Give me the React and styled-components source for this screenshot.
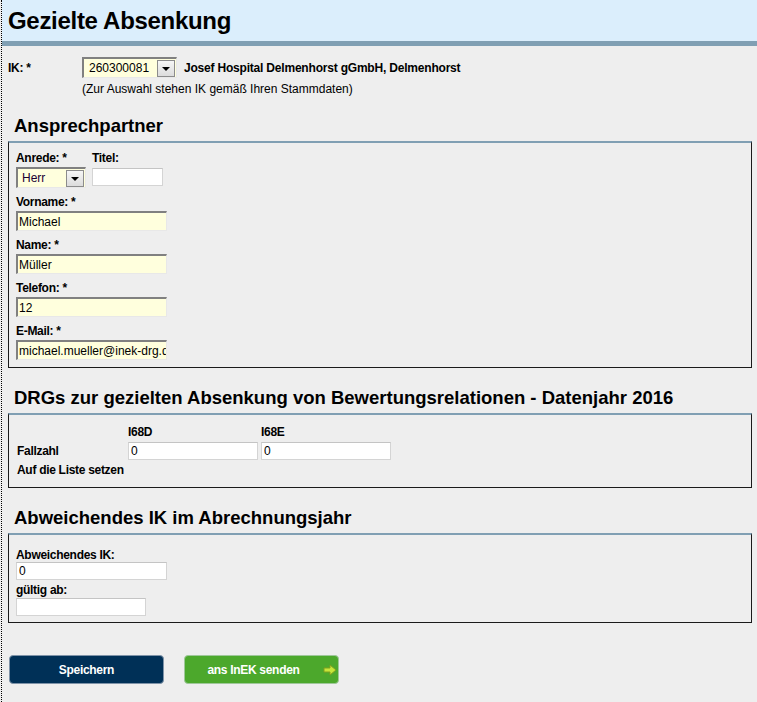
import React from "react";
import styled, { createGlobalStyle } from "styled-components";

const Global = createGlobalStyle`
  html, body { margin: 0; padding: 0; background: #eeeeee; }
  body { font-family: "Liberation Sans", Arial, sans-serif; font-size: 12px; color: #000; }
  * { box-sizing: border-box; }
`;

const Page = styled.div`
  margin-left: 1px;
  border-left: 1px dotted #000;
  min-height: 702px;
  background: #eeeeee;
`;

const Header = styled.div`
  height: 46px;
  background: #dbeefc;
  border-bottom: 5px solid #809fb3;
  padding-left: 6px;
`;

const Title = styled.h1`
  margin: 0;
  font-size: 24px;
  line-height: 41px;
  font-weight: bold;
  letter-spacing: -0.3px;
  color: #000;
`;

const Content = styled.div`
  padding: 11px 5px 0 6px;
`;

const IkRow = styled.div`
  display: flex;
  align-items: center;
  height: 21px;
`;

const IkLabel = styled.span`
  width: 74px;
  font-weight: bold;
  letter-spacing: -0.3px;
`;

const HospitalName = styled.span`
  margin-left: 7px;
  font-weight: bold;
  letter-spacing: -0.2px;
`;

const Note = styled.div`
  margin: 4px 0 0 74px;
  line-height: 14px;
`;

const SelectBox = styled.div`
  display: flex;
  align-items: center;
  width: ${(p) => p.$w}px;
  height: 21px;
  background: #ffffdd;
  border-top: 2px solid #808080;
  border-left: 2px solid #808080;
  border-right: 1px solid #e8e8e8;
  border-bottom: 1px solid #e8e8e8;
  padding-right: 1px;
`;

const SelectValue = styled.span`
  flex: 1;
  padding-left: ${(p) => p.$pad || 4}px;
  color: ${(p) => p.$color || "#000"};
  line-height: 16px;
`;

const ArrowBtn = styled.span`
  width: 18px;
  height: 17px;
  border: 1px solid #8c8c8c;
  background: linear-gradient(#f6f6f6, #dcdcdc);
  display: flex;
  align-items: center;
  justify-content: center;
  &::after {
    content: "";
    border-left: 4px solid transparent;
    border-right: 4px solid transparent;
    border-top: 4px solid #000;
    margin-top: 1px;
  }
`;

const SectionTitle = styled.h2`
  margin: 19px 0 4px 6px;
  font-size: 18.5px;
  line-height: 22px;
  font-weight: bold;
`;

const Box = styled.div`
  border: 1px solid #1a1a1a;
  border-top: 2px solid #809fb3;
  padding: ${(p) => p.$pad || "8px 7px 7px 7px"};
`;

const FieldLabel = styled.label`
  display: block;
  font-weight: bold;
  line-height: 14px;
  letter-spacing: -0.3px;
  margin-bottom: ${(p) => (p.$mb === undefined ? 2 : p.$mb)}px;
`;

const Group = styled.div`
  margin-bottom: ${(p) => (p.$mb === undefined ? 7 : p.$mb)}px;
`;

const YellowInput = styled.input`
  display: block;
  width: ${(p) => p.$w || 151}px;
  height: 20px;
  margin: 0;
  padding: 0 0 0 1px;
  font-family: "Liberation Sans", Arial, sans-serif;
  font-size: 12px;
  color: #000;
  background: #ffffdd;
  border-top: 2px solid #808080;
  border-left: 2px solid #808080;
  border-right: 1px solid #e8e8e8;
  border-bottom: 1px solid #e8e8e8;
  outline: none;
`;

const WhiteInput = styled.input`
  display: block;
  width: ${(p) => p.$w || 151}px;
  height: 18px;
  margin: 0;
  padding: 0 0 0 2px;
  font-family: "Liberation Sans", Arial, sans-serif;
  font-size: 12px;
  color: #000;
  background: #fff;
  border: 1px solid #d4d4d4;
  border-top-color: #c4c4c4;
  outline: none;
`;

const SalutationRow = styled.div`
  display: flex;
  align-items: flex-start;
  gap: 6px;
  margin-bottom: 7px;
`;

const TitleCol = styled.div`
  display: flex;
  flex-direction: column;
`;

const TitleInput = styled(WhiteInput)`
  margin-top: 3px;
`;

const DrgGrid = styled.div`
  display: grid;
  grid-template-columns: 111px 133px 133px;
  row-gap: 3px;
  align-items: center;
  padding-left: 1px;
`;

const Bold = styled.span`
  font-weight: bold;
  letter-spacing: -0.3px;
  line-height: 14px;
`;

const ButtonRow = styled.div`
  display: flex;
  gap: 20px;
  margin: 32px 0 0 1px;
`;

const Button = styled.button`
  position: relative;
  width: 155px;
  height: 29px;
  border-radius: 4px;
  border: 1px solid ${(p) => (p.$green ? "#9fc79a" : "#7f93a8")};
  background: ${(p) => (p.$green ? "#4ca82c" : "#003057")};
  color: #fff;
  font-family: "Liberation Sans", Arial, sans-serif;
  font-size: 12px;
  font-weight: bold;
  letter-spacing: -0.3px;
  padding: 0 ${(p) => (p.$green ? "16px" : "0")} 0 0;
  cursor: pointer;
`;

const ArrowIcon = styled.svg`
  position: absolute;
  right: 1px;
  top: 8px;
`;

function Select({ value, width, pad, color }) {
  return (
    <SelectBox $w={width}>
      <SelectValue $pad={pad} $color={color}>{value}</SelectValue>
      <ArrowBtn />
    </SelectBox>
  );
}

export default function App() {
  return (
    <>
      <Global />
      <Page>
        <Header>
          <Title>Gezielte Absenkung</Title>
        </Header>
        <Content>
          <IkRow>
            <IkLabel>IK: *</IkLabel>
            <Select value="260300081" width={95} pad={5} />
            <HospitalName>Josef Hospital Delmenhorst gGmbH, Delmenhorst</HospitalName>
          </IkRow>
          <Note>(Zur Auswahl stehen IK gemäß Ihren Stammdaten)</Note>

          <SectionTitle>Ansprechpartner</SectionTitle>
          <Box>
            <SalutationRow>
              <TitleCol>
                <FieldLabel>Anrede: *</FieldLabel>
                <Select value="Herr" width={70} pad={4} color="#1a0033" />
              </TitleCol>
              <TitleCol>
                <FieldLabel $mb={0}>Titel:</FieldLabel>
                <TitleInput $w={71} />
              </TitleCol>
            </SalutationRow>
            <Group>
              <FieldLabel>Vorname: *</FieldLabel>
              <YellowInput defaultValue="Michael" />
            </Group>
            <Group>
              <FieldLabel>Name: *</FieldLabel>
              <YellowInput defaultValue="Müller" />
            </Group>
            <Group>
              <FieldLabel>Telefon: *</FieldLabel>
              <YellowInput defaultValue="12" />
            </Group>
            <Group $mb={0}>
              <FieldLabel>E-Mail: *</FieldLabel>
              <YellowInput defaultValue="michael.mueller@inek-drg.de" />
            </Group>
          </Box>

          <SectionTitle>DRGs zur gezielten Absenkung von Bewertungsrelationen - Datenjahr 2016</SectionTitle>
          <Box $pad="10px 7px 10px 7px">
            <DrgGrid>
              <span />
              <Bold>I68D</Bold>
              <Bold>I68E</Bold>
              <Bold>Fallzahl</Bold>
              <WhiteInput $w={130} defaultValue="0" />
              <WhiteInput $w={130} defaultValue="0" />
              <Bold>Auf die Liste setzen</Bold>
            </DrgGrid>
          </Box>

          <SectionTitle>Abweichendes IK im Abrechnungsjahr</SectionTitle>
          <Box $pad="13px 7px 6px 7px">
            <Group $mb={3}>
              <FieldLabel $mb={0}>Abweichendes IK:</FieldLabel>
              <WhiteInput $w={151} defaultValue="0" />
            </Group>
            <Group $mb={0}>
              <FieldLabel $mb={1}>gültig ab:</FieldLabel>
              <WhiteInput $w={130} />
            </Group>
          </Box>

          <ButtonRow>
            <Button type="button">Speichern</Button>
            <Button type="button" $green>
              ans InEK senden
              <ArrowIcon width="14" height="12" viewBox="0 0 14 12">
                <path d="M1 4 H7 V1 L13 6 L7 11 V8 H1 Z" fill="#c6e63a" stroke="#7fa01e" strokeWidth="1" strokeLinejoin="round" />
              </ArrowIcon>
            </Button>
          </ButtonRow>
        </Content>
      </Page>
    </>
  );
}
